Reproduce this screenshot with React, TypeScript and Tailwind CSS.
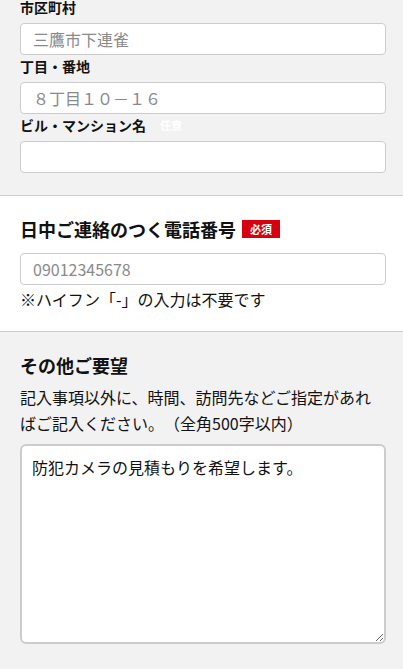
const fontStack = "font-['Noto_Sans_CJK_JP','Noto_Sans',sans-serif] [text-spacing-trim:space-all]";

const inputCls =
  "block w-full h-8 rounded-[4px] border border-[#cccccc] bg-white px-3 text-base text-[#222] placeholder:text-[#8a8a8a] outline-none";

function Field({ label, placeholder, optional }: { label: string; placeholder?: string; optional?: boolean }) {
  return (
    <div>
      <div className="flex items-center h-5">
        <span className="text-sm font-bold leading-5 text-[#111]">{label}</span>
        {optional && <span className="ml-[14px] text-[11px] font-bold text-white">任意</span>}
      </div>
      <input className={`${inputCls} mt-[6px]`} placeholder={placeholder} />
    </div>
  );
}

export default function App() {
  return (
    <div className={`${fontStack} w-[403px] h-[669px] overflow-hidden bg-[#f2f2f2] text-[#222]`}>
      {/* address fields */}
      <section className="pl-5 pr-[17px] -mt-[3px] pb-[22px] border-b border-[#cccccc]">
        <div className="flex flex-col gap-[1px]">
          <Field label="市区町村" placeholder="三鷹市下連雀" />
          <Field label="丁目・番地" placeholder="８丁目１０－１６" />
          <Field label="ビル・マンション名" optional />
        </div>
      </section>

      {/* phone */}
      <section className="bg-white pl-5 pr-[17px] pt-5 pb-5 border-b border-[#cccccc]">
        <div className="flex items-center h-[26px]">
          <h2 className="text-lg font-bold leading-[26px] text-[#111]">日中ご連絡のつく電話番号</h2>
          <span className="ml-[6px] h-[18px] px-2 flex items-center bg-[#d7000f] text-white text-[11px] font-bold">
            必須
          </span>
        </div>
        <input className={`${inputCls} mt-[11px]`} placeholder="09012345678" />
        <p className="mt-[2px] text-base leading-6 text-[#111]">※ハイフン「-」の入力は不要です</p>
      </section>

      {/* other requests */}
      <section className="pl-5 pr-[17px] pt-[19px]">
        <h2 className="text-lg font-bold leading-7 text-[#111]">その他ご要望</h2>
        <p className="mt-[5px] text-base leading-[26px] text-[#111]">
          記入事項以外に、時間、訪問先などご指定があればご記入ください。（全角500字以内）
        </p>
        <textarea
          className="mt-[8px] block w-full h-[200px] rounded-[6px] border-2 border-[#cccccc] bg-white px-[10px] py-2 text-base leading-[26px] text-[#111] outline-none"
          defaultValue="防犯カメラの見積もりを希望します。"
        />
      </section>
    </div>
  );
}
